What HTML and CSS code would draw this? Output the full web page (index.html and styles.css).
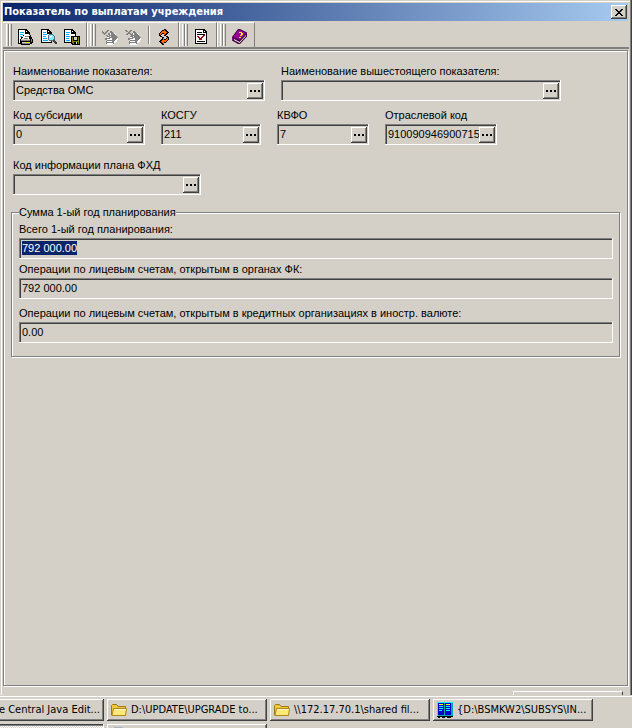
FILE: index.html
```html
<!DOCTYPE html>
<html lang="ru">
<head>
<meta charset="utf-8">
<title>Показатель по выплатам учреждения</title>
<link rel="stylesheet" href="styles.css">
</head>
<body>
<main class="window">
  <header class="titlebar">
    <h1>Показатель по выплатам учреждения</h1>
    <button class="close" type="button" aria-label="Закрыть"><svg width="8" height="7" viewBox="0 0 8 7" shape-rendering="crispEdges"><path d="M0 0h2v1h1v1h2v-1h1v-1h2v1h-1v1h-1v1h-1v1h1v1h1v1h1v1h-2v-1h-1v-1h-2v1h-1v1h-2v-1h1v-1h1v-1h1v-1h-1v-1h-1v-1h-1z"/></svg></button>
  </header>
  <div class="toolbar" role="toolbar">
    <div class="group">
      <i class="grip"></i>
      <button type="button" aria-label="Печать"><svg viewBox="0 0 16 16" shape-rendering="crispEdges">
        <path fill="#000" d="M0 0h8l4 4v2h1v2h1v2h1v4h-1v1h-2v1H3v-1H0z"/><path fill="#fff" d="M1 1h6v4h4v1H5v2H3v2H1z"/><path fill="#fff" d="M1 10h1v4H1zM8 2h1v1H8z"/>
        <path fill="#0af" d="M2 3h4v1H2zM2 5h3v1H2zM2 7h2v1H2z"/><path fill="#fff" d="M6 6h6v1h-1v3H4V9h1V7h1z"/>
        <path fill="#808080" d="M7 7h4v1H7zM6 9h4v1H6zM3 11h9v1H3z"/><path fill="#d4d0c8" d="M3 10h9v1H3zM4 13h8v1H4z"/>
        <path fill="#fe0" d="M8 13h3v1H8z"/><path fill="#808080" d="M13 10h1v3h-1zM4 14h8v1H4z"/></svg></button>
      <button type="button" aria-label="Просмотр"><svg viewBox="0 0 16 16" shape-rendering="crispEdges">
        <path fill="#000" d="M0 0h7l4 4v10H0z"/><path fill="#fff" d="M1 1h5v4h4v8H1z"/><path fill="#fff" d="M7 2h1v1H7z"/>
        <path fill="#0af" d="M2 3h3v1H2zM2 5h4v1H2zM2 7h3v1H2zM2 9h4v1H2zM2 11h5v1H2z"/>
        <path fill="#607080" d="M8 5h4v1h1v1h1v4h-1v1H8v-1H7V6h1z"/><path fill="#80f0ff" d="M8 6h4v1h1v3h-1v1H8z"/><path fill="#fff" d="M9 7h2v1H9zM9 8h1v1H9z"/>
        <path fill="#404040" d="M12 11h2v1h1v1h1v2h-2v-1h-1v-1h-1z"/></svg></button>
      <button type="button" aria-label="Сохранить"><svg viewBox="0 0 16 16" shape-rendering="crispEdges">
        <path fill="#000" d="M0 0h8l4 4v10H0z"/><path fill="#fff" d="M1 1h6v4h4v8H1z"/><path fill="#fff" d="M8 2h1v1H8z"/>
        <path fill="#0af" d="M2 3h4v1H2zM2 5h3v1H2zM2 7h4v1H2zM2 9h3v1H2zM2 11h4v1H2z"/>
        <path fill="#000" d="M7 7h9v9H8v-1H7z"/><path fill="#808000" d="M8 8h1v6H8zM14 8h1v7h-1zM9 12h5v1H9zM9 13h1v2H9z"/><path fill="#d4d0c8" d="M10 8h3v3h-3zM12 13h1v2h-1z"/></svg></button>
    </div>
    <div class="group">
      <i class="grip"></i>
      <button type="button" aria-label="Принять"><svg viewBox="0 0 16 16" shape-rendering="crispEdges">
        <path fill="#fff" d="M12 4h1v1h1v2h1v1h1v3h-1v2h-1v1h-2v2H5v-1h7z"/>
        <path fill="#808080" d="M0 2h1v1h1v1h1V3h1V2h1V1h2v1H6v1H5v1H4v1H3v1H2V5H1V4H0zM8 2h2v1h1v1h1v1h1v1h1v1h1v1h1v1h-1v1h-1v1h-1v1h-1v3H4v-3h1v-1H3V9h2V7H4V6h2V4h2z"/>
        <path fill="#fff" d="M8 4h1v2H8zM6 6h1v1H6zM8 7h1v1H8zM5 8h2v1H5zM8 9h2v1H8zM5 10h5v1H5zM5 12h5v1H5zM5 14h6v1H5z"/></svg></button>
      <button type="button" aria-label="Отклонить"><svg viewBox="0 0 16 16" shape-rendering="crispEdges">
        <path fill="#fff" d="M12 4h1v1h1v2h1v1h1v3h-1v2h-1v1h-2v2H5v-1h7z"/>
        <path fill="#808080" d="M0 1h2v1h1v1h1V2h1V1h2v1H6v1H5v1h1v1h1v1H5V5H3v1H1V5h1V4h1V3H1V2H0zM8 2h2v1h1v1h1v1h1v1h1v1h1v1h1v1h-1v1h-1v1h-1v1h-1v3H4v-3h1v-1H3V9h2V7h1V6h1V4h1z"/>
        <path fill="#fff" d="M8 4h1v2H8zM8 7h1v1H8zM5 8h2v1H5zM8 9h2v1H8zM5 10h5v1H5zM5 12h5v1H5zM5 14h6v1H5z"/></svg></button>
      <i class="sep"></i>
      <button type="button" aria-label="Обновить"><svg viewBox="0 0 16 16" shape-rendering="crispEdges">
        <path fill="#000" d="M8 0h2v1h1v1h1v1h1v1h-1v1h-1v1h-1v1H8V5H6v1H5v1h1v1H4V7H3V4h1V3h1V2h1V1h2z"/>
        <path fill="#f60" d="M8 1h1v1h1v1h1v1h-1v1H9v1H8V4H6v1H5v1H4V4h1V3h1V2h2z"/>
        <path fill="#000" d="M6 8h2v2h2V9h1V8h-1V7h2v1h1v3h-1v1h-1v1h-1v1H8v2H6v-1H5v-1H4v-1H3v-1h1v-1h1v-1h1z"/>
        <path fill="#f60" d="M7 9h1v2h2v-1h1V9h1v2h-1v1h-1v1H8v2H7v-1H6v-1H5v-1h1v-1h1z"/></svg></button>
    </div>
    <div class="group">
      <i class="grip"></i>
      <button type="button" aria-label="Проверить"><svg viewBox="0 0 16 16" shape-rendering="crispEdges">
        <path fill="#000" d="M1 0h9l3 3v12H1z"/><path fill="#fff" d="M2 1h7v3h3v10H2z"/><path fill="#fff" d="M10 2h1v1h-1z"/>
        <path d="M3 3h5v1H3zM3 5h8v1H3zM3 12h8v1H3z"/><path fill="#901010" d="M3 7h2v1h1v1h1V8h1V7h1V6h2v1h-1v1H9v1H8v2H5V9H4V8H3z"/></svg></button>
    </div>
    <div class="group">
      <i class="grip"></i>
      <button type="button" aria-label="Справка"><svg viewBox="0 0 16 16">
        <path fill="#400040" d="M6 0h2l7 3.500v4L8 15H6L0 11.500V8z"/><path fill="#909" d="M6.500 1H8l6 3-6.500 7L1 8z"/>
        <path fill="#fff" d="M2 10l5.500 3L14 6v1l-6.500 7L2 11z"/><path fill="#909" d="M0 8.500l1 .5v2.500l-1-.5z"/><path shape-rendering="crispEdges" fill="#fe0" d="M7 3h3v1h1v2h-1v1H8V6h1V4H7zM7 8h2v1H7z"/></svg></button>
    </div>
  </div>
  <form class="panel">
    <div class="row">
      <div class="field w-name"><label for="f1">Наименование показателя:</label><div class="box"><input id="f1" value="Средства ОМС"><button type="button" aria-label="Выбрать"></button></div></div>
      <div class="field w-parent"><label for="f2">Наименование вышестоящего показателя:</label><div class="box"><input id="f2"><button type="button" aria-label="Выбрать"></button></div></div>
    </div>
    <div class="row codes">
      <div class="field w-sub"><label for="f3">Код субсидии</label><div class="box"><input id="f3" value="0"><button type="button" aria-label="Выбрать"></button></div></div>
      <div class="field w-kosgu"><label for="f4">КОСГУ</label><div class="box"><input id="f4" value="211"><button type="button" aria-label="Выбрать"></button></div></div>
      <div class="field w-kvfo"><label for="f5">КВФО</label><div class="box"><input id="f5" value="7"><button type="button" aria-label="Выбрать"></button></div></div>
      <div class="field w-branch"><label for="f6">Отраслевой код</label><div class="box"><input id="f6" value="910090946900715"><button type="button" aria-label="Выбрать"></button></div></div>
    </div>
    <div class="row plan">
      <div class="field w-plan"><label for="f7">Код информации плана ФХД</label><div class="box"><input id="f7"><button type="button" aria-label="Выбрать"></button></div></div>
    </div>
    <fieldset>
      <legend>Сумма 1-ый год планирования</legend>
      <div class="field"><label for="total">Всего 1-ый год планирования:</label><div class="box"><input id="total" value="792 000.00"></div></div>
      <div class="field"><label for="f9">Операции по лицевым счетам, открытым в органах ФК:</label><div class="box"><input id="f9" value="792 000.00"></div></div>
      <div class="field last"><label for="f10">Операции по лицевым счетам, открытым в кредитных организациях в иностр. валюте:</label><div class="box"><input id="f10" value="0.00"></div></div>
    </fieldset>
  </form>
  <footer class="status"><span class="raised"></span></footer>
</main>
<nav class="taskbar">
  <button class="task" type="button"><span class="end">e Central Java Edit...</span></button>
  <button class="task" type="button"><svg viewBox="0 0 16 16"><path fill="#f0c83c" stroke="#a07810" d="M.5 13V3.500l1-1h4l1.500 2h7.500V13l-1 .5H1z"/><path fill="#ffe878" stroke="#b08818" d="M2.500 6.500h13L14.500 13.500H1z"/><path stroke="#fffbd0" fill="none" d="M3.500 7.500h11"/></svg><span>D:\UPDATE\UPGRADE to...</span></button>
  <button class="task" type="button"><svg viewBox="0 0 16 16"><path fill="#f0c83c" stroke="#a07810" d="M.5 13V3.500l1-1h4l1.500 2h7.500V13l-1 .5H1z"/><path fill="#ffe878" stroke="#b08818" d="M2.500 6.500h13L14.500 13.500H1z"/><path stroke="#fffbd0" fill="none" d="M3.500 7.500h11"/></svg><span>\\172.17.70.1\shared fil...</span></button>
  <button class="task" type="button"><svg viewBox="0 0 16 16" shape-rendering="crispEdges"><path fill="#00a8a8" d="M0 0h16v14H0z"/><path fill="#0ff" d="M0 0h16v1H0zM0 0h1v14H0z"/><path fill="#00c" d="M1 1h6v12H1zM8 1h6v12H8z"/><path fill="#ff0" d="M2 2h4v1H2zM9 2h4v1H9z"/><path fill="#0ff" d="M2 4h4v1H2zM2 6h4v1H2zM2 8h3v1H2zM9 4h4v1H9zM9 6h4v1H9zM9 8h4v1H9z"/><path fill="#000" d="M0 14h16v1H0zM1 15h2v1H1zM5 15h3v1H5zM10 15h4v1h-4z"/></svg><span>{D:\BSMKW2\SUBSYS\IN...</span></button>
  <button class="task pressed" type="button" aria-label="Активное окно"></button>
  <button class="task" type="button" aria-label="Документ"><svg viewBox="0 0 16 16"><path fill="#a8b4c4" d="M3 0h8l2 2v12H3z"/></svg></button>
</nav>
<script src="script.js"></script>
</body>
</html>
```
FILE: styles.css
```css
* { box-sizing: border-box; }
body {
  margin: 0;
  height: 100vh;
  display: flex;
  flex-direction: column;
  overflow: hidden;
  background: #d4d0c8;
  color: #000;
  font: 11px/14px "Liberation Sans", Arial, sans-serif;
}
button, input { font: inherit; color: inherit; padding: 0; margin: 0; border: 0; border-radius: 0; background: none; }
svg { display: block; }

.window {
  flex: 1;
  min-height: 0;
  display: flex;
  flex-direction: column;
  padding: 3px 3px 0;
  box-shadow: inset -1px 0 #404040, inset -2px 0 #808080, inset 1px 0 #d4d0c8, inset 0 1px #d4d0c8, inset 2px 2px #fff;
}
.titlebar {
  display: flex;
  align-items: center;
  justify-content: space-between;
  height: 18px;
  margin-right: 1px;
  padding: 0 1px;
  background: linear-gradient(to right, #0a246a, #a6caf0);
}
h1 { margin: 0; color: #fff; font: bold 11px/18px "DejaVu Sans Condensed", Tahoma, sans-serif; white-space: nowrap; }
.close {
  display: grid;
  place-items: center;
  width: 16px;
  height: 14px;
  background: #d4d0c8;
  box-shadow: inset -1px -1px #404040, inset 1px 1px #fff, inset -2px -2px #808080;
}

.toolbar { display: flex; height: 28px; padding-top: 1px; border-bottom: 2px solid #808080; }
.group {
  display: flex;
  align-items: center;
  gap: 1px;
  padding: 0 3px;
  border: solid;
  border-width: 1px 1px 0 0;
  border-color: #fff #808080;
}
.group + .group { box-shadow: inset 1px 0 #fff; }
.group button { display: grid; place-items: end center; width: 22px; height: 20px; }
.group svg { width: 16px; height: 16px; }
.grip { width: 6px; height: 22px; margin-right: 2px; background: linear-gradient(to right, #fff 1px, #d4d0c8 1px 2px, #808080 2px 3px, #fff 3px 4px, #d4d0c8 4px 5px, #808080 5px); }
.sep { width: 2px; height: 18px; margin: 0 2px 0 3px; background: linear-gradient(to right, #808080 1px, #fff 1px); }

.panel {
  flex: 1;
  min-height: 0;
  margin: 1px 1px 0 0;
  padding: 13px 7px;
  border: 1px solid #808080;
  box-shadow: inset 1px 1px #fff, 1px 1px #fff;
}
.row { display: flex; gap: 16px; padding-left: 2px; }
.codes { margin-top: 7px; }
.plan { margin-top: 13px; }
.field { display: flex; flex-direction: column; gap: 2px; min-width: 0; }
label { white-space: nowrap; }
.w-name { flex: 0 1 252px; }
.w-parent { flex: 0 1 280px; }
.w-sub { flex: 0 1 132px; }
.w-kosgu { flex: 0 1 100px; }
.w-kvfo { flex: 0 1 92px; }
.w-branch { flex: 0 1 112px; }
.w-plan { flex: 0 1 188px; }
.box {
  display: flex;
  height: 21px;
  padding: 3px 2px 2px 3px;
  box-shadow: inset -1px -1px #fff, inset 1px 1px #808080, inset 2px 2px #404040;
}
.box input { flex: 1; min-width: 0; width: 0; height: 14px; outline: 0; line-height: 14px; }
.box input::selection { background: #0a246a; color: #fff; }
.box button {
  width: 16px;
  height: 16px;
  background: linear-gradient(#000, #000) 3px 7px / 2px 2px no-repeat, linear-gradient(#000, #000) 7px 7px / 2px 2px no-repeat, linear-gradient(#000, #000) 11px 7px / 2px 2px no-repeat;
  box-shadow: inset -1px -1px #404040, inset 1px 1px #fff, inset -2px -2px #808080;
}

fieldset {
  min-width: 0;
  margin: 11px 0 0;
  padding: 4px 6px 13px 7px;
  border: 1px solid #808080;
  box-shadow: inset 1px 1px #fff, 1px 1px #fff;
}
legend { padding: 0; line-height: 12px; background: #d4d0c8; }
fieldset .field + .field { margin-top: 3px; }
fieldset .field.last { margin-top: 7px; }

.status { display: flex; justify-content: flex-end; height: 9px; padding: 5px 6px 0 0; }
.raised { width: 110px; height: 4px; border: solid; border-width: 1px 1px 0; border-color: #fff #404040 #fff #fff; }

.taskbar {
  display: grid;
  grid-template-columns: repeat(4, 160px);
  grid-template-rows: 22px 22px;
  gap: 3px;
  height: 33px;
  padding-top: 3px;
  margin-left: -56px;
  border-top: 1px solid #d4d0c8;
  box-shadow: inset 0 1px #fff;
  overflow: hidden;
  font: 11px/14px "DejaVu Sans Condensed", Tahoma, sans-serif;
}
.task {
  display: flex;
  align-items: center;
  gap: 4px;
  padding: 0 4px;
  white-space: nowrap;
  box-shadow: inset -1px -1px #404040, inset 1px 1px #fff, inset -2px -2px #808080;
}
.task svg { flex: none; width: 16px; height: 16px; }
.task .end { margin-left: auto; }
.pressed {
  background: repeating-conic-gradient(#fff 0 25%, #d4d0c8 0 50%) 0 0 / 2px 2px;
  box-shadow: inset -1px -1px #fff, inset 1px 1px #404040, inset 2px 2px #808080;
}
```
FILE: script.js
```js
const total = document.getElementById('total');
total.focus();
total.select();
```
